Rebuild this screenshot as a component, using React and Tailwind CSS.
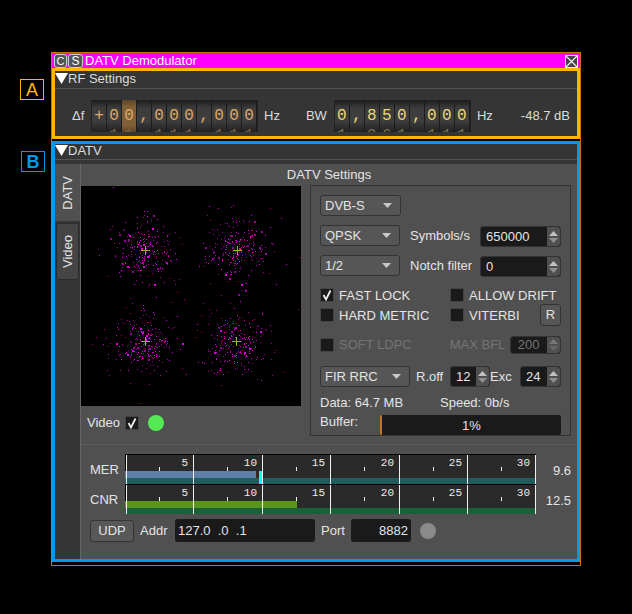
const sans = "font-['Liberation_Sans',Arial,sans-serif]"
const mono = "font-['Liberation_Mono','Courier_New',monospace]"

const centers = [
  [64, 64],
  [156, 64],
  [64, 155],
  [155, 155],
]

// seeded random so the constellation stays the same between renders
function makePoints() {
  let seed = 4711
  const rnd = () => {
    seed = (seed * 16807) % 2147483647
    return seed / 2147483647
  }
  const gauss = () => (rnd() + rnd() + rnd() + rnd() - 2) * 1.25
  const points = []
  centers.forEach(([cx, cy]) => {
    for (let i = 0; i < 250; i++) {
      const spread = i % 8 === 0 ? 36 : 21
      points.push({
        x: Math.round(cx + gauss() * spread),
        y: Math.round(cy + gauss() * spread),
        dim: rnd() > 0.4,
        big: rnd() > 0.93,
      })
    }
  })
  return points
}

const points = makePoints()

function Constellation() {
  return (
    <svg width="220" height="220" className="block bg-black shrink-0">
      {points.map((p, i) => (
        <rect key={i} x={p.x} y={p.y} width={p.big ? 2 : 1} height={p.big ? 2 : 1} fill={p.dim ? "#9a009a" : "#e000e0"} />
      ))}
      {centers.map(([x, y]) => (
        <path key={x + "-" + y} d={`M${x - 4} ${y + 0.5}H${x + 5}M${x + 0.5} ${y - 4}V${y + 5}`} stroke="#b8a820" strokeWidth="1" />
      ))}
    </svg>
  )
}

function Cell({ ch, prev, next, active, color, ghost }) {
  return (
    <div
      className={
        "w-[15px] h-[32px] overflow-hidden flex flex-col items-center justify-center border-r border-[#1c1c1c] text-[16px] leading-[20px] " +
        mono
      }
      style={{
        background: active
          ? "linear-gradient(#5a4428,#7f5f35 20%,#7f5f35 80%,#5a4428)"
          : "linear-gradient(#1c1c1c,#3c3c3c 25%,#3e3e3e 65%,#222222)",
      }}
    >
      <span className="h-[20px] shrink-0" style={{ color: ghost }}>{prev || "\u00a0"}</span>
      <span className="h-[20px] shrink-0" style={{ color }}>{ch}</span>
      <span className="h-[20px] shrink-0" style={{ color: ghost }}>{next || "\u00a0"}</span>
    </div>
  )
}

function Dial({ cells, color, ghost, active }) {
  return (
    <div className="flex border-l border-r border-[#222] shrink-0">
      {cells.map((c, i) => {
        const digit = /\d/.test(c)
        return (
          <Cell
            key={i}
            ch={c}
            prev={digit ? String((+c + 9) % 10) : ""}
            next={digit ? String((+c + 1) % 10) : ""}
            active={i === active}
            color={color}
            ghost={ghost}
          />
        )
      })}
    </div>
  )
}

function Header({ title, h }) {
  return (
    <div className="bg-[#353535] border-b border-[#555] flex items-center pb-[2px] shrink-0" style={{ height: h }}>
      <svg width="13" height="12" className="shrink-0">
        <path d="M0 0H13L6.5 11Z" fill="#fff" />
      </svg>
      <span className="text-[13px] text-[#dcdcdc] leading-none">{title}</span>
    </div>
  )
}

function Combo({ label, w }) {
  return (
    <div
      className="h-[21px] rounded-[3px] border border-[#333] bg-[#565656] flex items-center justify-between pl-[4px] pr-[8px] text-[13px] text-[#e4e4e4] shrink-0"
      style={{ width: w }}
    >
      <span>{label}</span>
      <svg width="9" height="5">
        <path d="M0 0H9L4.5 5Z" fill="#c8c8c8" />
      </svg>
    </div>
  )
}

function Spin({ value, w, h = 21, dim, pad = 4 }) {
  return (
    <div
      className={"rounded-[3px] bg-[#1a1a1a] border border-[#333] flex items-center justify-between shrink-0 text-[13px] " + (dim ? "text-[#747474]" : "text-[#e4e4e4]")}
      style={{ width: w, height: h }}
    >
      <span style={{ paddingLeft: pad }}>{value}</span>
      <div className="w-[13px] h-full bg-[#505050] rounded-r-[3px] flex flex-col items-center justify-center gap-[2px]">
        <svg width="9" height="5"><path d="M4.5 0L9 5H0Z" fill={dim ? "#777" : "#c0c0c0"} /></svg>
        <svg width="9" height="5"><path d="M0 0H9L4.5 5Z" fill={dim ? "#666" : "#909090"} /></svg>
      </div>
    </div>
  )
}

function Check({ label, checked, dim }) {
  return (
    <div className={"flex items-center gap-[5px] text-[13px] leading-none whitespace-nowrap " + (dim ? "text-[#747474]" : "text-[#e4e4e4]")}>
      <div className="w-[14px] h-[14px] bg-[#1a1a1a] border border-[#444] flex items-center justify-center shrink-0">
        {checked && (
          <svg width="12" height="12">
            <path d="M2.5 6L5 10.5L9.5 1.5" fill="none" stroke="#eee" strokeWidth="1.8" />
          </svg>
        )}
      </div>
      {label}
    </div>
  )
}

const majors = [1, 68, 137, 205, 274, 342, 410]

function Gauge({ bar, barEnd, low, peak }) {
  return (
    <svg width="411" height="30" className="block shrink-0">
      <rect width="411" height="30" fill="#2a2a2a" />
      <rect width="411" height="1" fill="#000" />
      <rect width="1" height="30" fill="#000" />
      <rect y="17" width={barEnd} height="7" fill={bar} />
      <rect y="24" width="411" height="6" fill={low} />
      {peak && <rect x={peak} y="17" width="3" height="13" fill="#00ffff" />}
      {majors.map((x) => (
        <rect key={x} x={x} y="1" width="1" height="29" fill="#f0f0f0" />
      ))}
      {[34, 102, 171, 239, 308, 376].map((x) => (
        <rect key={x} x={x} y="13" width="1" height="4" fill="#f0f0f0" />
      ))}
      {["5", "10", "15", "20", "25", "30"].map((t, i) => (
        <text
          key={t}
          x={majors[i + 1] - 5}
          y="12"
          textAnchor="end"
          fill="#ececec"
          fontSize="11"
          fontFamily="'Liberation Mono', monospace"
        >
          {t}
        </text>
      ))}
    </svg>
  )
}

function GaugeRow({ label, value, ...gauge }) {
  return (
    <div className="flex items-center">
      <span className="w-[35px] shrink-0 pt-[2px]">{label}</span>
      <Gauge {...gauge} />
      <span className="w-[35px] text-right shrink-0 pt-[3px]">{value}</span>
    </div>
  )
}

export default function App() {
  return (
    <div className={"relative w-[632px] h-[614px] bg-black pt-[52px] pl-[51px] overflow-hidden " + sans}>
      {/* section markers next to the window */}
      <div className="absolute left-[20px] top-[79px] w-[24px] h-[21px] border border-[#ffb800] flex items-center justify-center text-[#ffb800] text-[18px] leading-none">
        A
      </div>
      <div className="absolute left-[21px] top-[151px] w-[24px] h-[21px] border border-[#0099ee] flex items-center justify-center text-[#0099ee] text-[18px] font-bold leading-none">
        B
      </div>

      <div className="w-[530px] h-[514px] border border-[#c87000] bg-black flex flex-col">
        <div className="h-[15px] bg-[#ff00ff] flex items-center text-white text-[13px] leading-none shrink-0">
          <div className="ml-[2px] mt-[1px] w-[13px] h-[14px] rounded-[3px] bg-[#555] border border-[#ccc] flex items-center justify-center text-[11px]">C</div>
          <div className="ml-[1px] mt-[1px] w-[15px] h-[14px] rounded-[3px] bg-[#555] border border-[#ccc] flex items-center justify-center text-[12px]">S</div>
          <span className="ml-[2px] flex-1">DATV Demodulator</span>
          <svg width="13" height="13" className="mr-[2px] mt-[2px]">
            <rect x="0.5" y="0.5" width="12" height="12" fill="#444" stroke="#eee" />
            <path d="M1 1L12 12M12 1L1 12" stroke="#eee" strokeWidth="1.2" />
          </svg>
        </div>

        <div className="h-[71px] border-[3px] border-[#ffb800] bg-[#353535] flex flex-col shrink-0">
          <Header title="RF Settings" h={18} />
          <div className="flex items-center pt-[11px] text-[13px] text-[#dcdcdc]">
            <span className="ml-[17px] w-[19px]">Δf</span>
            <Dial cells={["+", "0", "0", ",", "0", "0", "0", ",", "0", "0", "0"]} color="#e0a868" ghost="#77634a" active={2} />
            <span className="ml-[6px]">Hz</span>
            <span className="ml-[26px] w-[28px]">BW</span>
            <Dial cells={["0", ",", "8", "5", "0", ",", "0", "0", "0"]} color="#e8d878" ghost="#77704a" />
            <span className="ml-[6px]">Hz</span>
            <span className="ml-auto mr-[7px]">-48.7 dB</span>
          </div>
        </div>

        <div className="h-[421px] mt-[2px] border-[3px] border-[#0099ee] bg-[#353535] flex flex-col shrink-0">
          <Header title="DATV" h={16} />
          <div className="flex flex-1 pt-[4px] min-h-0">
            <div className="w-[25px] flex flex-col shrink-0 gap-[2px]">
              <div className="h-[57px] bg-[#505050] flex items-center justify-center">
                <span className="[writing-mode:vertical-rl] rotate-180 text-[13px] text-[#e4e4e4]">DATV</span>
              </div>
              <div className="h-[57px] mx-[1px] bg-[#454545] border border-[#2c2c2c] rounded-[3px] flex items-center justify-center">
                <span className="[writing-mode:vertical-rl] rotate-180 text-[13px] text-[#e4e4e4]">Video</span>
              </div>
            </div>

            <div className="flex-1 bg-[#505050] border-l border-[#666] flex flex-col text-[13px] text-[#e4e4e4]">
              <div className="flex shrink-0">
                <div className="w-[220px] shrink-0">
                  <div className="h-[22px]" />
                  <Constellation />
                  <div className="flex items-center h-[34px] pl-[6px]">
                    <span className="w-[38px]">Video</span>
                    <Check checked />
                    <div className="ml-[9px] w-[16px] h-[16px] rounded-full bg-[#55e855]" />
                  </div>
                </div>
                <div className="flex-1 min-w-0">
                  <div className="h-[21px] -ml-[220px] text-center leading-[21px]">DATV Settings</div>
                  <div className="ml-[9px] w-[261px] h-[251px] border border-[#333] pl-[9px] pt-[9px] flex flex-col">
                    <Combo label="DVB-S" w={81} />
                    <div className="flex items-start mt-[9px]">
                      <Combo label="QPSK" w={80} />
                      <span className="ml-[10px] w-[70px] leading-[21px]">Symbols/s</span>
                      <div className="mt-[1px]"><Spin value="650000" w={81} pad={5} /></div>
                    </div>
                    <div className="flex items-start mt-[8px]">
                      <Combo label="1/2" w={80} />
                      <span className="ml-[10px] w-[70px] leading-[21px]">Notch filter</span>
                      <div className="mt-[1px]"><Spin value="0" w={81} pad={5} /></div>
                    </div>
                    <div className="grid grid-cols-[130px_1fr] mt-[11px] gap-y-[6px]">
                      <Check label="FAST LOCK" checked />
                      <Check label="ALLOW DRIFT" />
                      <Check label="HARD METRIC" />
                      <div className="flex items-center justify-between w-[111px]">
                        <Check label="VITERBI" />
                        <div className="w-[21px] h-[22px] -my-[4px] rounded-[3px] bg-[#565656] border border-[#333] flex items-center justify-center">R</div>
                      </div>
                    </div>
                    <div className="flex items-center mt-[13px] h-[19px]">
                      <Check label="SOFT LDPC" dim />
                      <span className="ml-[38px] text-[#747474] w-[60px] whitespace-nowrap">MAX BFL</span>
                      <Spin value="200" w={51} h={18} dim pad={7} />
                    </div>
                    <div className="flex items-center mt-[12px]">
                      <Combo label="FIR RRC" w={90} />
                      <span className="ml-[6px] w-[34px]">R.off</span>
                      <Spin value="12" w={40} pad={5} />
                      <span className="w-[30px]">Exc</span>
                      <Spin value="24" w={41} pad={5} />
                    </div>
                    <div className="flex mt-[8px] leading-[15px]">
                      <span className="w-[120px]">Data: 64.7 MB</span>
                      <span>Speed: 0b/s</span>
                    </div>
                    <div className="flex mt-[5px]">
                      <span className="w-[60px] leading-[14px]">Buffer:</span>
                      <div className="w-[181px] h-[20px] rounded-[2px] bg-[#1a1a1a] border-l-2 border-[#c07818] text-center leading-[21px]">1%</div>
                    </div>
                  </div>
                </div>
              </div>

              <div className="mt-[4px] border-t border-[#5c5c5c] pt-[9px] pl-[9px]">
                <GaugeRow label="MER" value="9.6" bar="#5f7fa8" barEnd={131} low="#1e5e5e" peak={134} />
                <GaugeRow label="CNR" value="12.5" bar="#5a961e" barEnd={172} low="#1a6038" />
                <div className="flex items-center mt-[5px]">
                  <div className="w-[44px] h-[22px] rounded-[3px] bg-[#585858] border border-[#333] flex items-center justify-center">UDP</div>
                  <span className="ml-[6px] w-[35px]">Addr</span>
                  <div className="w-[140px] h-[23px] rounded-[3px] bg-[#1a1a1a] pl-[3px] leading-[23px] whitespace-pre">127.0  .0  .1</div>
                  <span className="ml-[6px] w-[30px]">Port</span>
                  <div className="w-[60px] h-[23px] rounded-[3px] bg-[#1a1a1a] pr-[3px] text-right leading-[23px]">8882</div>
                  <div className="ml-[9px] w-[16px] h-[16px] rounded-full bg-[#8a8a8a]" />
                </div>
              </div>
            </div>
          </div>
        </div>
      </div>
    </div>
  )
}
